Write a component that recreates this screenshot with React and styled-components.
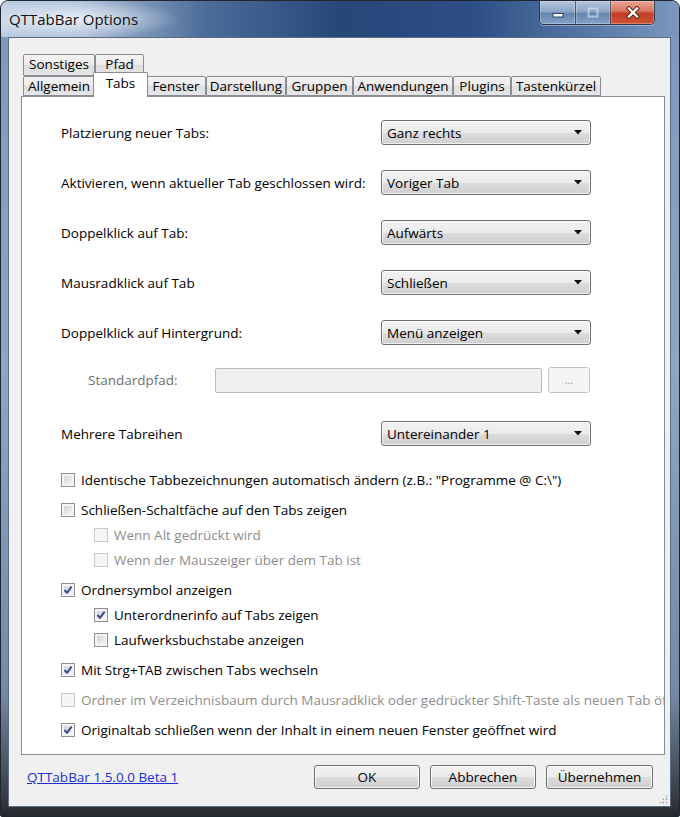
import React from 'react';
import styled, { createGlobalStyle } from 'styled-components';

const GlobalStyle = createGlobalStyle`
  html, body {
    margin: 0;
    padding: 0;
    background: #ffffff;
  }
  body {
    font-family: "Open Sans", "Liberation Sans", sans-serif;
    font-size: 13.5px;
    color: #000;
  }
`;

const Window = styled.div`
  width: 680px;
  height: 817px;
  box-sizing: border-box;
  display: flex;
  flex-direction: column;
  border: 1px solid #1f2630;
  border-radius: 8px 8px 2px 2px;
  overflow: hidden;
  background: linear-gradient(to bottom, #7d98bd 0%, #8ea6c4 45%, #7489a6 85%, #3a4048 97%, #26292e 100%);
`;

const TitleBar = styled.div`
  height: 36px;
  flex: none;
  display: flex;
  align-items: flex-start;
  padding: 0 24px 0 8px;
  background:
    radial-gradient(ellipse 110px 20px at 70px 18px, rgba(236, 242, 249, 0.95), rgba(236, 242, 249, 0) 100%),
    linear-gradient(to right, #bccde1 0%, #a9bdd6 12%, #4c6d9a 30%, #27467a 50%, #2e4f84 70%, #5a7ba9 88%, #7b98be 100%);
`;

const Title = styled.div`
  line-height: 36px;
  font-size: 15px;
  color: #101010;
`;

const CaptionGroup = styled.div`
  margin-left: auto;
  display: flex;
  height: 23px;
  border: 1px solid rgba(35, 45, 65, 0.85);
  border-top: none;
  border-radius: 0 0 5px 5px;
  overflow: hidden;
  box-shadow: 0 1px 0 rgba(255, 255, 255, 0.35);
`;

const CaptionButton = styled.div`
  width: ${p => p.$w}px;
  display: flex;
  align-items: center;
  justify-content: center;
  border-left: ${p => (p.$first ? 'none' : '1px solid rgba(40, 55, 80, 0.7)')};
  background: ${p =>
    p.$close
      ? 'linear-gradient(to bottom, #e8a596 0%, #d87861 42%, #c23d22 55%, #cf5537 100%)'
      : 'linear-gradient(to bottom, #b3c5dc 0%, #8ea7c7 45%, #6684ad 55%, #86a3c7 100%)'};
  box-shadow: inset 0 0 0 1px rgba(255, 255, 255, 0.25);
`;

const Client = styled.div`
  flex: 1;
  margin: 0 8px 9px 7px;
  background: #f0f0f0;
  border: 1px solid #5b6b80;
  display: flex;
  flex-direction: column;
  padding: 16px 5px 0 12px;
  position: relative;
`;

const TabRow = styled.div`
  display: flex;
  align-items: flex-end;
  height: ${p => p.$h || 20}px;
  padding-left: 2px;
`;

const Tab = styled.div`
  box-sizing: border-box;
  width: ${p => (p.$active ? p.$w + 4 : p.$w)}px;
  height: ${p => (p.$active ? 25 : p.$h || 20)}px;
  margin: ${p => (p.$active ? '0 -2px -1px -2px' : '0')};
  padding-top: ${p => (p.$active ? 2 : 1)}px;
  text-align: center;
  line-height: 17px;
  border: 1px solid #898c95;
  border-bottom: ${p => (p.$active ? 'none' : '1px solid #898c95')};
  border-radius: 2px 2px 0 0;
  background: ${p => (p.$active ? '#ffffff' : 'linear-gradient(to bottom, #f3f3f3 0%, #ebebeb 50%, #dedede 51%, #e6e6e6 100%)')};
  position: ${p => (p.$active ? 'relative' : 'static')};
  z-index: ${p => (p.$active ? 2 : 'auto')};
  white-space: nowrap;
`;

const Panel = styled.div`
  flex: none;
  height: 659px;
  box-sizing: border-box;
  background: #ffffff;
  border: 1px solid #898c95;
  padding: 23px 0 0 39px;
  overflow: hidden;
  display: flex;
  flex-direction: column;
`;

const FormRow = styled.div`
  display: grid;
  grid-template-columns: 320px 210px;
  align-items: center;
  height: 25px;
  margin-top: ${p => p.$top || 0}px;
`;

const Label = styled.div`
  flex: none;
  width: ${p => (p.$w ? `${p.$w}px` : 'auto')};
  color: ${p => (p.$disabled ? '#6f6f6f' : '#000')};
  white-space: nowrap;
`;

const Select = styled.div`
  box-sizing: border-box;
  height: 25px;
  display: flex;
  align-items: center;
  padding: 0 8px 0 5px;
  border: 1px solid #707070;
  border-radius: 3px;
  background: linear-gradient(to bottom, #f2f2f2 0%, #ebebeb 50%, #dddddd 51%, #cfcfcf 100%);
  box-shadow: inset 0 0 0 1px rgba(255, 255, 255, 0.7);
  span {
    flex: 1;
    white-space: nowrap;
  }
`;

const PathRow = styled.div`
  display: flex;
  align-items: center;
  height: 26px;
  padding-left: 27px;
  margin-top: 22px;
`;

const PathField = styled.div`
  box-sizing: border-box;
  flex: none;
  width: 327px;
  height: 25px;
  border: 1px solid #b8bcc0;
  border-radius: 2px;
  background: #f0f0f0;
`;

const SmallButton = styled.div`
  box-sizing: border-box;
  flex: none;
  width: 42px;
  height: 26px;
  margin-left: 6px;
  border: 1px solid #c4c4c4;
  border-radius: 3px;
  background: #f4f4f4;
  color: #a0a0a0;
  font-size: 11px;
  display: flex;
  align-items: center;
  justify-content: center;
  padding-bottom: 2px;
`;

const CheckList = styled.div`
  margin-top: 21px;
  display: flex;
  flex-direction: column;
`;

const CheckRow = styled.div`
  display: flex;
  align-items: center;
  height: 25px;
  padding-left: ${p => (p.$level ? 33 : 0)}px;
  margin-top: ${p => (p.$level ? 0 : 5)}px;
  white-space: nowrap;
  color: ${p => (p.$disabled ? '#8d8d8d' : '#000')};
  &:first-child {
    margin-top: 0;
  }
`;

const Box = styled.span`
  box-sizing: border-box;
  flex: none;
  width: 14px;
  height: 14px;
  margin-right: 6px;
  border: 1px solid ${p => (p.$disabled ? '#c8c8c8' : '#8e8f8f')};
  background: ${p => (p.$disabled ? '#f4f4f4' : 'linear-gradient(135deg, #c9ccd1 0%, #e6e7e9 55%, #fafafa 100%)')};
  box-shadow: inset 0 0 0 2px ${p => (p.$disabled ? '#f7f7f7' : '#f4f4f4')};
  display: flex;
  align-items: center;
  justify-content: center;
`;

const Footer = styled.div`
  flex: 1;
  display: flex;
  align-items: flex-start;
  padding: 10px 12px 0 6px;
`;

const Link = styled.a`
  color: #1a2fd0;
  text-decoration: underline;
  line-height: 24px;
  cursor: pointer;
`;

const Buttons = styled.div`
  margin-left: auto;
  display: flex;
  gap: 10px;
`;

const Button = styled.div`
  box-sizing: border-box;
  width: ${p => p.$w || 106}px;
  height: 24px;
  border: 1px solid #707070;
  border-radius: 3px;
  background: linear-gradient(to bottom, #f2f2f2 0%, #ebebeb 50%, #dddddd 51%, #cfcfcf 100%);
  box-shadow: inset 0 0 0 1px rgba(255, 255, 255, 0.75);
  display: flex;
  align-items: center;
  justify-content: center;
`;

const Grip = styled.div`
  position: absolute;
  right: 2px;
  bottom: 2px;
  width: 10px;
  height: 10px;
  background-image: radial-gradient(circle, #a9a9a9 0.9px, transparent 1.1px);
  background-size: 3.4px 3.4px;
  clip-path: polygon(100% 0, 100% 100%, 0 100%);
`;

const Arrow = () => (
  <svg width="8" height="5" viewBox="0 0 8 5">
    <polygon points="0,0 8,0 4,4.5" fill="#111" />
  </svg>
);

const Check = () => (
  <svg width="10" height="10" viewBox="0 0 10 10">
    <polyline points="1.5,5 4,7.8 8.6,1.6" fill="none" stroke="#3a4a8e" strokeWidth="2" strokeLinejoin="round" />
  </svg>
);

const Checkbox = ({ checked, disabled, level, children }) => (
  <CheckRow $level={level} $disabled={disabled}>
    <Box $disabled={disabled}>{checked && <Check />}</Box>
    {children}
  </CheckRow>
);

const Dropdown = ({ value }) => (
  <Select>
    <span>{value}</span>
    <Arrow />
  </Select>
);

const rowOne = [
  { name: 'Sonstiges', w: 72 },
  { name: 'Pfad', w: 49 },
];

const rowTwo = [
  { name: 'Allgemein', w: 72 },
  { name: 'Tabs', w: 51, active: true },
  { name: 'Fenster', w: 60 },
  { name: 'Darstellung', w: 80 },
  { name: 'Gruppen', w: 67 },
  { name: 'Anwendungen', w: 100 },
  { name: 'Plugins', w: 58 },
  { name: 'Tastenkürzel', w: 90 },
];

const selects = [
  ['Platzierung neuer Tabs:', 'Ganz rechts'],
  ['Aktivieren, wenn aktueller Tab geschlossen wird:', 'Voriger Tab'],
  ['Doppelklick auf Tab:', 'Aufwärts'],
  ['Mausradklick auf Tab', 'Schließen'],
  ['Doppelklick auf Hintergrund:', 'Menü anzeigen'],
];

const checks = [
  { text: 'Identische Tabbezeichnungen automatisch ändern (z.B.: "Programme @ C:\\")' },
  { text: 'Schließen-Schaltfäche auf den Tabs zeigen' },
  { text: 'Wenn Alt gedrückt wird', level: 1, disabled: true },
  { text: 'Wenn der Mauszeiger über dem Tab ist', level: 1, disabled: true },
  { text: 'Ordnersymbol anzeigen', checked: true },
  { text: 'Unterordnerinfo auf Tabs zeigen', level: 1, checked: true },
  { text: 'Laufwerksbuchstabe anzeigen', level: 1 },
  { text: 'Mit Strg+TAB zwischen Tabs wechseln', checked: true },
  { text: 'Ordner im Verzeichnisbaum durch Mausradklick oder gedrückter Shift-Taste als neuen Tab öffnen', disabled: true },
  { text: 'Originaltab schließen wenn der Inhalt in einem neuen Fenster geöffnet wird', checked: true },
];

export default function App() {
  return (
    <>
      <GlobalStyle />
      <Window>
        <TitleBar>
          <Title>QTTabBar Options</Title>
          <CaptionGroup>
            <CaptionButton $w={35} $first>
              <svg width="12" height="12" viewBox="0 0 12 12">
                <rect x="1" y="6.5" width="10" height="3.5" fill="#ffffff" stroke="#33465f" strokeWidth="1" />
              </svg>
            </CaptionButton>
            <CaptionButton $w={34}>
              <svg width="12" height="11" viewBox="0 0 12 11">
                <rect x="1.5" y="1.5" width="9" height="8" fill="none" stroke="rgba(230,236,245,0.55)" strokeWidth="2" />
              </svg>
            </CaptionButton>
            <CaptionButton $w={43} $close>
              <svg width="14" height="13" viewBox="0 0 14 13">
                <path d="M3 2.5 L11 10.5 M11 2.5 L3 10.5" stroke="#5a1a10" strokeWidth="4.2" strokeLinecap="square" />
                <path d="M3 2.5 L11 10.5 M11 2.5 L3 10.5" stroke="#ffffff" strokeWidth="2.4" strokeLinecap="square" />
              </svg>
            </CaptionButton>
          </CaptionGroup>
        </TitleBar>

        <Client>
          <TabRow $h={22}>
            {rowOne.map(t => (
              <Tab key={t.name} $w={t.w} $h={22}>{t.name}</Tab>
            ))}
          </TabRow>
          <TabRow>
            {rowTwo.map(t => (
              <Tab key={t.name} $w={t.w} $active={t.active}>{t.name}</Tab>
            ))}
          </TabRow>

          <Panel>
            {selects.map(([label, value], i) => (
              <FormRow key={label} $top={i === 0 ? 0 : 25}>
                <Label>{label}</Label>
                <Dropdown value={value} />
              </FormRow>
            ))}
            <PathRow>
              <Label $disabled $w={127}>Standardpfad:</Label>
              <PathField />
              <SmallButton>...</SmallButton>
            </PathRow>
            <FormRow $top={28}>
              <Label>Mehrere Tabreihen</Label>
              <Dropdown value="Untereinander 1" />
            </FormRow>

            <CheckList>
              {checks.map(c => (
                <Checkbox key={c.text} checked={c.checked} disabled={c.disabled} level={c.level}>
                  {c.text}
                </Checkbox>
              ))}
            </CheckList>
          </Panel>

          <Footer>
            <Link>QTTabBar 1.5.0.0 Beta 1</Link>
            <Buttons>
              <Button>OK</Button>
              <Button>Abbrechen</Button>
              <Button $w={107}>Übernehmen</Button>
            </Buttons>
          </Footer>
          <Grip />
        </Client>
      </Window>
    </>
  );
}
